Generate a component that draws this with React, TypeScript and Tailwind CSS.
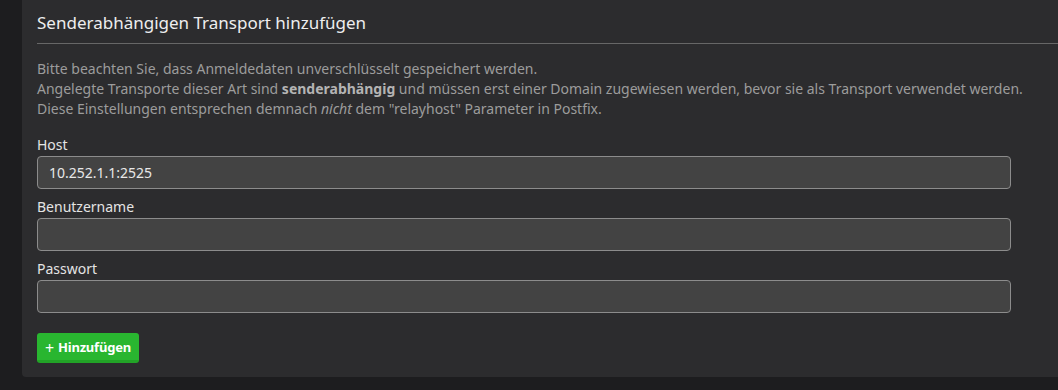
import type { FC } from 'react';

const Field: FC<{ label: string; value?: string }> = ({ label, value }) => (
  <div className="flex flex-col">
    <label className="text-[14px] leading-[20px] text-[#e4e4e4]">{label}</label>
    <input
      type="text"
      defaultValue={value}
      className="mt-[1px] h-[33px] w-[974px] rounded-[4px] border border-[#8c8c8c] bg-[#434343] px-[11px] text-[14px] text-[#e8e8e8] outline-none"
    />
  </div>
);

function App() {
  return (
    <div className="min-h-[390px] bg-[#1d1d1f] pl-[22px] font-['Noto_Sans',sans-serif]">
      <div className="h-[377px] rounded-bl-[4px] bg-[#2c2c2e] pl-[15px]">
        <div className="flex h-[44px] items-end border-b border-[#676767] pb-[9px]">
          <h3 className="text-[17px] leading-[22px] text-[#eeeeee]">Senderabhängigen Transport hinzufügen</h3>
        </div>
        <div className="pt-[15px] text-[14px] leading-[20px] text-[#9c9c9c]">
          <p>Bitte beachten Sie, dass Anmeldedaten unverschlüsselt gespeichert werden.</p>
          <p>
            Angelegte Transporte dieser Art sind <b className="font-bold text-[#b4b4b4]">senderabhängig</b> und müssen erst
            einer Domain zugewiesen werden, bevor sie als Transport verwendet werden.
          </p>
          <p>
            Diese Einstellungen entsprechen demnach <i>nicht</i> dem "relayhost" Parameter in Postfix.
          </p>
        </div>
        <div className="mt-[16px] flex flex-col gap-[8px]">
          <Field label="Host" value="10.252.1.1:2525" />
          <Field label="Benutzername" />
          <Field label="Passwort" />
        </div>
        <button className="mt-[20px] flex h-[30px] items-center gap-[4px] rounded-[3px] border-b-[3px] border-[#22a327] bg-[#29b630] px-[8px] pt-[2px] text-[13px] font-bold tracking-[-0.2px] text-white">
          <span className="text-[16px] font-normal leading-none">+</span>
          Hinzufügen
        </button>
      </div>
    </div>
  );
}

export default App;
